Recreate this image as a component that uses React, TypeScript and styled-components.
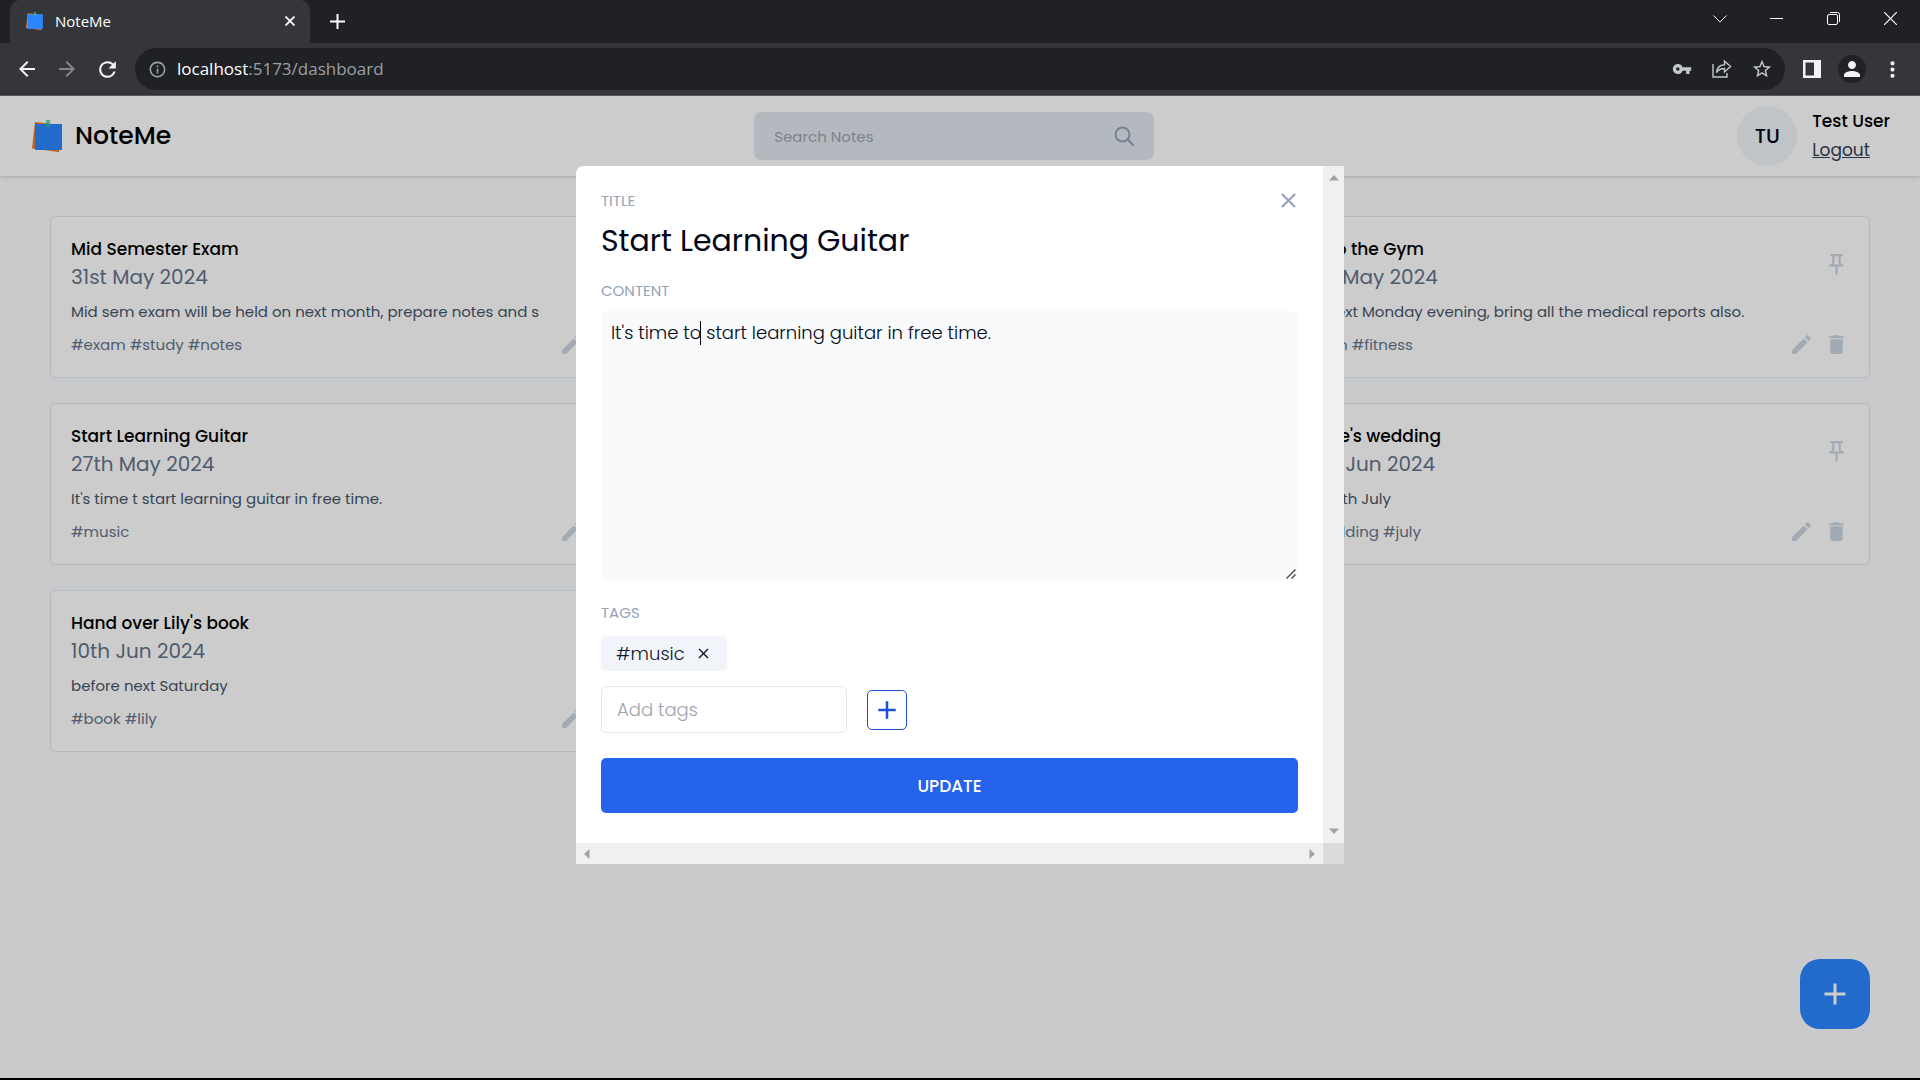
import React from "react";
import styled, { createGlobalStyle, css } from "styled-components";
import {
  MdAdd,
  MdClose,
  MdCreate,
  MdDelete,
  MdMoreVert,
  MdOutlinePushPin,
  MdPerson,
  MdStarBorder,
  MdRefresh,
  MdArrowBack,
  MdArrowForward,
  MdInfoOutline,
  MdVpnKey,
} from "react-icons/md";

const ui = `Poppins, Inter, "Open Sans", sans-serif`;
const chrome = `"Segoe UI", "Open Sans", "Noto Sans", sans-serif`;

const Global = createGlobalStyle`
  *, *::before, *::after { box-sizing: border-box; }
  html, body, #root { height: 100%; }
  body { margin: 0; background: #000; font-family: ${ui}; overflow: hidden; }
  button, input, textarea { font: inherit; }
  h1, h2, p { margin: 0; }
  svg { display: block; flex: none; }
`;

const plainButton = css`
  display: flex;
  align-items: center;
  justify-content: center;
  padding: 0;
  border: 0;
  background: none;
  color: inherit;
`;

const Window = styled.div`
  display: flex;
  flex-direction: column;
  height: 100vh;
  padding-bottom: 2px;
`;

/* browser frame */
const TabStrip = styled.div`
  display: flex;
  align-items: flex-end;
  height: 43px;
  flex: none;
  background: #202124;
  color: #fff;
`;
const Tab = styled.div`
  display: flex;
  align-items: center;
  gap: 11px;
  width: 300px;
  height: 43px;
  margin-left: 10px;
  padding: 0 12px 2px 16px;
  border-radius: 10px 10px 0 0;
  background: #35363a;
  font: 15px/20px ${chrome};
`;
const TabTitle = styled.span`
  flex: 1;
`;
const TabButton = styled.button`
  ${plainButton}
  width: 16px;
  height: 16px;
`;
const NewTab = styled.button`
  ${plainButton}
  width: 24px;
  height: 43px;
  margin-left: 15px;
`;
const WindowButtons = styled.div`
  display: flex;
  gap: 42px;
  height: 37px;
  margin-left: auto;
  margin-right: 22px;
  align-self: flex-start;
`;
const WindowButton = styled.button`
  ${plainButton}
  width: 15px;
`;
const Toolbar = styled.div`
  display: flex;
  align-items: center;
  height: 53px;
  flex: none;
  padding: 0 16px 0 15px;
  background: #35363a;
  border-bottom: 1px solid #5b5c60;
  color: #f1f3f4;
`;
const NavButtons = styled.div`
  display: flex;
  gap: 16px;
`;
const NavButton = styled.button<{ $dim?: boolean }>`
  ${plainButton}
  width: 24px;
  height: 24px;
  color: ${(p) => (p.$dim ? "#84868a" : "inherit")};
`;
const AddressBar = styled.div`
  display: flex;
  align-items: center;
  flex: 1;
  height: 42px;
  margin-left: 16px;
  padding: 0 13px;
  border-radius: 21px;
  background: #202124;
  color: #9aa0a6;
  font: 17px/24px ${chrome};
`;
const Url = styled.span`
  flex: 1;
  margin-left: 10px;
  b { color: #fff; font-weight: 400; }
`;
const AddressButtons = styled.div`
  display: flex;
  gap: 20px;
  color: #c4c7ca;
  button { width: 20px; }
`;
const ToolbarButtons = styled.div`
  display: flex;
  align-items: center;
  gap: 14px;
  margin-left: 15px;
`;
const Profile = styled.button`
  ${plainButton}
  width: 28px;
  height: 28px;
  border-radius: 50%;
  background: #202124;
`;

/* dashboard */
const Page = styled.div`
  position: relative;
  flex: 1;
  min-height: 0;
  background: #fcfdff;
`;
const Header = styled.header`
  display: flex;
  align-items: center;
  justify-content: space-between;
  height: 80px;
  padding: 0 30px 0 32px;
  background: #fff;
  box-shadow: 0 1px 4px rgba(0, 0, 0, 0.18);
`;
const Brand = styled.div`
  display: flex;
  align-items: center;
  gap: 11px;
  color: #000;
  font-size: 25px;
  font-weight: 500;
  line-height: 40px;
`;
const SearchBox = styled.form`
  display: flex;
  align-items: center;
  width: 400px;
  height: 48px;
  padding: 0 20px;
  border-radius: 7px;
  background: #e2e8f0;
  color: #94a3b8;
`;
const SearchInput = styled.input`
  flex: 1;
  min-width: 0;
  padding: 0;
  border: 0;
  outline: 0;
  background: none;
  font-size: 15px;
  &::placeholder { color: #9ca3af; opacity: 1; }
`;
const User = styled.div`
  display: flex;
  align-items: center;
  gap: 15px;
`;
const Avatar = styled.div`
  display: grid;
  place-items: center;
  width: 60px;
  height: 60px;
  border-radius: 50%;
  background: #f1f5f9;
  color: #020617;
  font-size: 20px;
  font-weight: 500;
`;
const UserText = styled.div`
  display: flex;
  flex-direction: column;
  align-items: flex-start;
  font-size: 17px;
  line-height: 29px;
  font-weight: 500;
`;
const Logout = styled.a`
  color: #334155;
  font-weight: 400;
  text-decoration: underline;
`;
const Notes = styled.main`
  display: grid;
  grid-template-columns: repeat(3, 1fr);
  gap: 25px;
  padding: 40px 50px;
`;
const Card = styled.article<{ $column: number; $row: number }>`
  grid-column: ${(p) => p.$column};
  grid-row: ${(p) => p.$row};
  display: flex;
  flex-direction: column;
  padding: 17px 20px 20px;
  border: 1px solid #e2e8f0;
  border-radius: 5px;
  background: #fff;
`;
const CardRow = styled.div`
  display: flex;
  align-items: center;
  justify-content: space-between;
`;
const CardHeading = styled.div`
  padding-bottom: 4px;
`;
const CardTitle = styled.h2`
  color: #000;
  font-size: 17px;
  line-height: 30px;
  font-weight: 500;
`;
const CardDate = styled.p`
  color: #64748b;
  font-size: 20px;
  line-height: 26px;
`;
const CardText = styled.p`
  margin-top: 6px;
  color: #475569;
  font-size: 15px;
  line-height: 24px;
  white-space: nowrap;
`;
const CardTags = styled.p`
  color: #64748b;
  font-size: 15px;
  line-height: 24px;
`;
const TagsRow = styled(CardRow)`
  margin-top: 8px;
`;
const Actions = styled.div`
  display: flex;
  gap: 10px;
`;
const IconButton = styled.button`
  ${plainButton}
  color: #cbd5e1;
`;
const Fab = styled.button`
  ${plainButton}
  position: absolute;
  right: 50px;
  bottom: 49px;
  width: 70px;
  height: 70px;
  border-radius: 20px;
  background: #2b85ff;
  color: #fff;
`;

/* edit dialog */
const Overlay = styled.div`
  position: absolute;
  inset: 0;
  display: flex;
  align-items: flex-start;
  justify-content: center;
  padding-top: 70px;
  background: rgba(0, 0, 0, 0.2);
`;
const Dialog = styled.div`
  display: grid;
  grid-template-columns: 1fr 21px;
  grid-template-rows: auto 21px;
  width: 40%;
  border-radius: 7px 0 0 0;
  background: #fff;
`;
const Form = styled.form`
  display: flex;
  flex-direction: column;
  padding: 22px 25px 30px;
`;
const TopRow = styled.div`
  display: flex;
  align-items: center;
  justify-content: space-between;
`;
const Label = styled.label`
  color: #94a3b8;
  font-size: 15px;
  line-height: 25px;
`;
const Close = styled.button`
  ${plainButton}
  width: 20px;
  color: #94a3b8;
`;
const TitleInput = styled.input`
  width: 100%;
  height: 45px;
  margin: 5px 0 15px;
  padding: 0;
  border: 0;
  outline: 0;
  color: #020617;
  font-size: 30px;
  line-height: 45px;
`;
const ContentBox = styled.div`
  position: relative;
  display: flex;
  margin: 8px 0 19px;
`;
const Content = styled.textarea`
  width: 100%;
  height: 270px;
  padding: 9px 10px;
  border: 0;
  border-radius: 5px;
  outline: 0;
  resize: none;
  background: #f8fafc;
  color: #020617;
  font-size: 18px;
  font-weight: 300;
  line-height: 26px;
`;
const Grip = styled.svg`
  position: absolute;
  right: 2px;
  bottom: 2px;
`;
const Caret = styled.span`
  position: absolute;
  left: 99px;
  top: 10px;
  width: 1px;
  height: 24px;
  background: #000;
`;
const Chip = styled.div`
  display: flex;
  align-items: center;
  align-self: flex-start;
  gap: 10px;
  height: 35px;
  margin: 11px 0 15px;
  padding: 0 15px;
  border-radius: 5px;
  background: #f1f5f9;
  color: #0f172a;
  font-size: 18px;
  font-weight: 300;
`;
const ChipButton = styled.button`
  ${plainButton}
`;
const AddRow = styled.div`
  display: flex;
  align-items: center;
  gap: 20px;
`;
const TagInput = styled.input`
  width: 246px;
  height: 47px;
  padding: 0 15px;
  border: 1px solid #e5e7eb;
  border-radius: 5px;
  outline: 0;
  font-size: 18px;
  font-weight: 300;
  &::placeholder { color: #9ca3af; opacity: 1; }
`;
const AddTag = styled.button`
  ${plainButton}
  width: 40px;
  height: 40px;
  border: 1px solid #1d4ed8;
  border-radius: 5px;
  color: #1d4ed8;
`;
const Update = styled.button`
  height: 55px;
  margin-top: 25px;
  border: 0;
  border-radius: 5px;
  background: #2563eb;
  color: #fff;
  font-size: 17px;
  font-weight: 500;
`;
const Track = styled.div<{ $vertical?: boolean }>`
  display: flex;
  flex-direction: ${(p) => (p.$vertical ? "column" : "row")};
  align-items: center;
  justify-content: space-between;
  padding: ${(p) => (p.$vertical ? "9px 0" : "0 6px")};
  background: #f0f0f0;
  color: #a3a3a3;
`;
const Corner = styled.div`
  background: #dcdcdc;
`;

const Logo = ({ size }: { size: number }) => (
  <svg width={size} height={size} viewBox="0 0 32 32" aria-hidden="true">
    <path d="M3 2 30 5 27 32 0 28.500Z" fill="#ea7a2c" />
    <path d="M3 4H30V30H3Z" fill="#2b85ff" />
    <path d="M14 0h4v7h-4z" fill="#2fc295" fillOpacity=".75" />
  </svg>
);

const ArrowIcon = styled.svg<{ $turn: number }>`
  transform: rotate(${(p) => p.$turn}deg);
`;
const Arrow = ({ turn }: { turn: number }) => (
  <ArrowIcon $turn={turn} width="10" height="6" viewBox="0 0 10 6">
    <path d="M5 0 10 5.500H0Z" fill="currentColor" />
  </ArrowIcon>
);

const notes = [
  { title: "Mid Semester Exam", date: "31st May 2024", text: "Mid sem exam will be held on next month, prepare notes and s", tags: "#exam #study #notes", column: 1, row: 1 },
  { title: "Go to the Gym", date: "31st May 2024", text: "On next Monday evening, bring all the medical reports also.", tags: "#gym #fitness", column: 3, row: 1 },
  { title: "Start Learning Guitar", date: "27th May 2024", text: "It's time t start learning guitar in free time.", tags: "#music", column: 1, row: 2 },
  { title: "Annie's wedding", date: "10th Jun 2024", text: "on 20th July", tags: "#wedding #july", column: 3, row: 2 },
  { title: "Hand over Lily's book", date: "10th Jun 2024", text: "before next Saturday", tags: "#book #lily", column: 1, row: 3 },
];

export default function App() {
  return (
    <Window>
      <Global />
      <TabStrip>
        <Tab>
          <Logo size={18} />
          <TabTitle>NoteMe</TabTitle>
          <TabButton aria-label="Close tab">
            <svg width="10" height="10" viewBox="0 0 10 10" stroke="currentColor" strokeWidth="1.800"><path d="M.5.500l9 9M9.500.500l-9 9" /></svg>
          </TabButton>
        </Tab>
        <NewTab aria-label="New tab">
          <svg width="15" height="15" viewBox="0 0 15 15" stroke="currentColor" strokeWidth="2"><path d="M7.500 0v15M0 7.500h15" /></svg>
        </NewTab>
        <WindowButtons>
          <WindowButton aria-label="Search tabs">
            <svg width="14" height="8" viewBox="0 0 14 8" fill="none" stroke="currentColor"><path d="m.5.500 6.500 6.500L13.500.500" /></svg>
          </WindowButton>
          <WindowButton aria-label="Minimize">
            <svg width="13" height="1" viewBox="0 0 13 1"><path d="M0 0h13v1H0z" fill="currentColor" /></svg>
          </WindowButton>
          <WindowButton aria-label="Restore">
            <svg width="13" height="13" viewBox="0 0 13 13" fill="none" stroke="currentColor"><rect x=".5" y="2.500" width="10" height="10" rx="1.500" /><path d="M3 .5h7.500a2 2 0 0 1 2 2V10" /></svg>
          </WindowButton>
          <WindowButton aria-label="Close window">
            <svg width="13" height="13" viewBox="0 0 13 13" stroke="currentColor" strokeWidth="1.200"><path d="m0 0 13 13M13 0 0 13" /></svg>
          </WindowButton>
        </WindowButtons>
      </TabStrip>
      <Toolbar>
        <NavButtons>
          <NavButton aria-label="Back"><MdArrowBack size={24} /></NavButton>
          <NavButton aria-label="Forward" $dim><MdArrowForward size={24} /></NavButton>
          <NavButton aria-label="Reload"><MdRefresh size={25} /></NavButton>
        </NavButtons>
        <AddressBar>
          <MdInfoOutline size={19} />
          <Url><b>localhost</b>:5173/dashboard</Url>
          <AddressButtons>
            <NavButton aria-label="Passwords"><MdVpnKey size={20} /></NavButton>
            <NavButton aria-label="Share">
              <svg width="20" height="20" viewBox="0 0 20 20" fill="none" stroke="currentColor" strokeWidth="1.400"><path d="M1 5v13h14v-4M4.500 13.500C5 8.500 8 6 12.500 5.700V2l6 5.500-6 5.500V9.500c-3.500 0-6 1-8 4Z" /></svg>
            </NavButton>
            <NavButton aria-label="Bookmark"><MdStarBorder size={22} /></NavButton>
          </AddressButtons>
        </AddressBar>
        <ToolbarButtons>
          <NavButton aria-label="Side panel">
            <svg width="18" height="18" viewBox="0 0 18 18"><path fillRule="evenodd" d="M0 0h18v18H0zM2.500 2.500v13H11v-13z" fill="currentColor" /></svg>
          </NavButton>
          <Profile aria-label="Profile"><MdPerson size={24} /></Profile>
          <NavButton aria-label="Menu"><MdMoreVert size={25} /></NavButton>
        </ToolbarButtons>
      </Toolbar>
      <Page>
        <Header>
          <Brand><Logo size={32} />NoteMe</Brand>
          <SearchBox>
            <SearchInput aria-label="Search Notes" placeholder="Search Notes" />
            <svg width="20" height="20" viewBox="0 0 20 20" fill="none" stroke="currentColor" strokeWidth="2" strokeLinecap="round"><circle cx="8.500" cy="8.500" r="7" /><path d="m13.500 13.500 5.500 5.500" /></svg>
          </SearchBox>
          <User>
            <Avatar>TU</Avatar>
            <UserText>
              <span>Test User</span>
              <Logout href="#logout">Logout</Logout>
            </UserText>
          </User>
        </Header>
        <Notes>
          {notes.map((n) => (
            <Card key={n.title} $column={n.column} $row={n.row}>
              <CardRow>
                <CardHeading>
                  <CardTitle>{n.title}</CardTitle>
                  <CardDate>{n.date}</CardDate>
                </CardHeading>
                <IconButton aria-label="Pin note"><MdOutlinePushPin size={25} /></IconButton>
              </CardRow>
              <CardText>{n.text}</CardText>
              <TagsRow>
                <CardTags>{n.tags}</CardTags>
                <Actions>
                  <IconButton aria-label="Edit note"><MdCreate size={25} /></IconButton>
                  <IconButton aria-label="Delete note"><MdDelete size={25} /></IconButton>
                </Actions>
              </TagsRow>
            </Card>
          ))}
        </Notes>
        <Fab aria-label="Add note"><MdAdd size={36} /></Fab>
        <Overlay>
          <Dialog role="dialog" aria-label="Edit note">
            <Form>
              <TopRow>
                <Label htmlFor="title">TITLE</Label>
                <Close type="button" aria-label="Close"><MdClose size={25} /></Close>
              </TopRow>
              <TitleInput id="title" defaultValue="Start Learning Guitar" />
              <Label htmlFor="content">CONTENT</Label>
              <ContentBox>
                <Content id="content" defaultValue="It's time to start learning guitar in free time." />
                <Caret />
                <Grip width="10" height="10" viewBox="0 0 10 10" stroke="#444" strokeWidth="1.300"><path d="M.5 9.500l9-9M5.500 9.500l4-4" /></Grip>
              </ContentBox>
              <Label htmlFor="tag">TAGS</Label>
              <Chip>
                #music
                <ChipButton type="button" aria-label="Remove tag"><MdClose size={17} /></ChipButton>
              </Chip>
              <AddRow>
                <TagInput id="tag" placeholder="Add tags" />
                <AddTag type="button" aria-label="Add tag"><MdAdd size={30} /></AddTag>
              </AddRow>
              <Update type="button">UPDATE</Update>
            </Form>
            <Track $vertical><Arrow turn={0} /><Arrow turn={180} /></Track>
            <Track><Arrow turn={-90} /><Arrow turn={90} /></Track>
            <Corner />
          </Dialog>
        </Overlay>
      </Page>
    </Window>
  );
}
